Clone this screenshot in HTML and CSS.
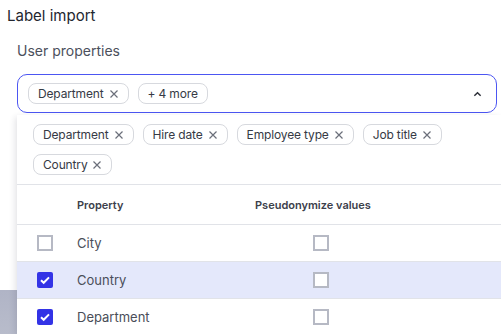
FILE: index.html
```html
<!DOCTYPE html>
<html lang="en">
<head>
  <meta charset="UTF-8">
  <title>Label import</title>
  <link rel="stylesheet" href="styles.css">
</head>
<body>
  <div class="backdrop"></div>
  <div class="page">
    <h1>Label import</h1>
    <div class="field">
      <label class="field-label">User properties</label>
      <div class="select">
        <div class="chips">
          <span class="chip">Department <svg class="x" viewBox="0 0 10 10"><path d="M1.5 1.5l7 7M8.5 1.5l-7 7"/></svg></span>
          <span class="chip">+ 4 more</span>
        </div>
        <svg class="chevron" viewBox="0 0 10 6"><path d="M1.5 5L5 1.5 8.5 5"/></svg>
      </div>
    </div>
  </div>

  <div class="menu">
    <div class="chips menu-chips">
      <span class="chip">Department <svg class="x" viewBox="0 0 10 10"><path d="M1.5 1.5l7 7M8.5 1.5l-7 7"/></svg></span>
      <span class="chip">Hire date <svg class="x" viewBox="0 0 10 10"><path d="M1.5 1.5l7 7M8.5 1.5l-7 7"/></svg></span>
      <span class="chip">Employee type <svg class="x" viewBox="0 0 10 10"><path d="M1.5 1.5l7 7M8.5 1.5l-7 7"/></svg></span>
      <span class="chip">Job title <svg class="x" viewBox="0 0 10 10"><path d="M1.5 1.5l7 7M8.5 1.5l-7 7"/></svg></span>
      <span class="chip">Country <svg class="x" viewBox="0 0 10 10"><path d="M1.5 1.5l7 7M8.5 1.5l-7 7"/></svg></span>
    </div>
    <div class="table">
      <div class="row head">
        <div></div>
        <div>Property</div>
        <div>Pseudonymize values</div>
      </div>
      <div class="row">
        <div><span class="box"></span></div>
        <div>City</div>
        <div><span class="box pseudo"></span></div>
      </div>
      <div class="row selected">
        <div><span class="box checked"><svg viewBox="0 0 16 16"><path d="M4 8.2l2.7 2.6L12 5.4"/></svg></span></div>
        <div>Country</div>
        <div><span class="box pseudo"></span></div>
      </div>
      <div class="row">
        <div><span class="box checked"><svg viewBox="0 0 16 16"><path d="M4 8.2l2.7 2.6L12 5.4"/></svg></span></div>
        <div>Department</div>
        <div><span class="box pseudo"></span></div>
      </div>
    </div>
  </div>
</body>
</html>
```

FILE: styles.css
```css
html, body {
  margin: 0;
  height: 100%;
  overflow: hidden;
}
body {
  font-family: Inter, "Noto Sans", sans-serif;
  background: #fff;
  color: #23262f;
  position: relative;
}
.page {
  padding: 6px 4px 0 7px;
}
h1 {
  margin: 0;
  font-size: 15px;
  font-weight: 400;
  line-height: 20px;
  color: #23262f;
}
.field {
  margin: 15px 0 0 10px;
}
.field-label {
  display: block;
  font-size: 14px;
  line-height: 20px;
  color: #4b505c;
  margin-bottom: 13px;
}
.select {
  height: 37px;
  border: 1px solid #4c56f2;
  border-radius: 10px;
  display: flex;
  align-items: center;
  justify-content: space-between;
  padding: 0 14px 0 10px;
}
.chips {
  display: flex;
  flex-wrap: wrap;
  gap: 9px;
}
.chip {
  display: inline-flex;
  align-items: center;
  gap: 5px;
  height: 19px;
  padding: 0 9px;
  border: 1px solid #d7d9de;
  border-radius: 8px;
  font-size: 12px;
  letter-spacing: -0.15px;
  color: #363a45;
  background: #fff;
}
.x {
  width: 10px;
  height: 10px;
  fill: none;
  stroke: #6b6f7a;
  stroke-width: 1.2;
}
.chevron {
  width: 9px;
  height: 6px;
  fill: none;
  stroke: #2c2f38;
  stroke-width: 1.6;
}
.backdrop {
  position: absolute;
  left: 0;
  top: 290px;
  width: 20px;
  height: 44px;
  background: linear-gradient(180deg, #b0b4c6, #b8bccb);
}
.menu {
  position: absolute;
  left: 17px;
  top: 115px;
  width: 484px;
  height: 219px;
  background: #fff;
  box-shadow: -2px 2px 6px rgba(30, 35, 60, 0.12);
}
.menu-chips {
  padding: 9px 40px 9px 16px;
  border-bottom: 1px solid #e1e3e8;
}
.row {
  display: grid;
  grid-template-columns: 60px 178px 1fr;
  align-items: center;
  height: 36px;
  border-bottom: 1px solid #e1e3e8;
  font-size: 13px;
  color: #4a4e59;
}
.row.head {
  height: 39px;
  font-size: 11px;
  font-weight: 600;
  color: #3c404b;
}
.row.selected {
  background: #e4e8fb;
}
.box {
  display: block;
  box-sizing: border-box;
  width: 16px;
  height: 16px;
  margin-left: 20px;
  border: 2px solid #b6b9c4;
  background: #fff;
}
.box.pseudo {
  margin-left: 58px;
}
.box.checked {
  border: none;
  background: #3333e6;
  border-radius: 2px;
}
.box.checked svg {
  display: block;
  width: 16px;
  height: 16px;
  fill: none;
  stroke: #fff;
  stroke-width: 2;
}
```
